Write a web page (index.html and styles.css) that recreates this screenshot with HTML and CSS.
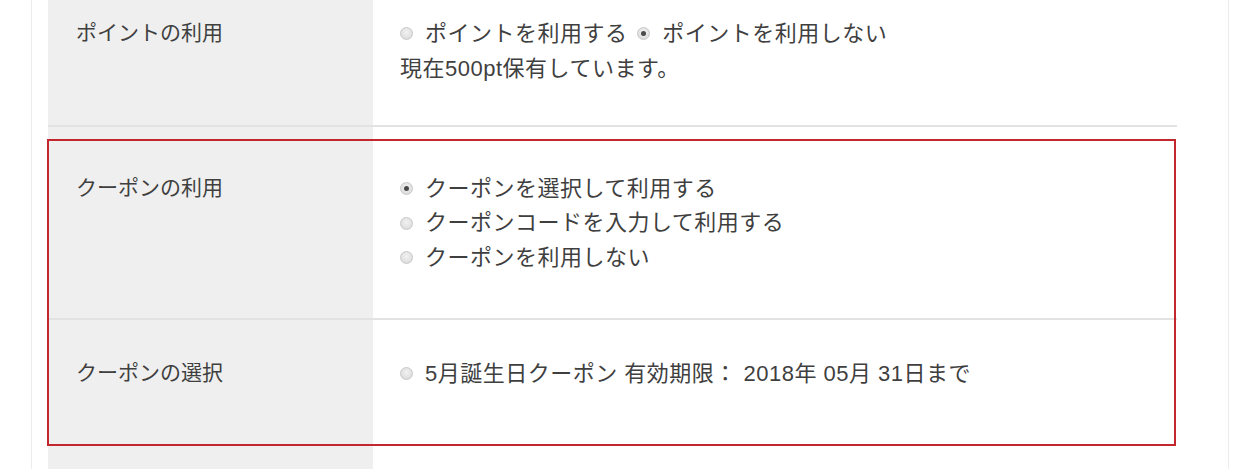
FILE: index.html
```html
<!DOCTYPE html>
<html lang="ja">
<head>
<meta charset="utf-8">
<title>ポイント・クーポンの利用</title>
<link rel="stylesheet" href="styles.css">
</head>
<body>
<div class="page">
  <div class="form">
    <div class="row row-points">
      <div class="label">ポイントの利用</div>
      <div class="value">
        <div class="line">
          <span class="opt"><span class="radio"></span>ポイントを利用する</span>
          <span class="opt"><span class="radio checked"></span>ポイントを利用しない</span>
        </div>
        <div class="line">現在500pt保有しています。</div>
      </div>
    </div>
    <div class="highlight">
      <div class="row row-coupon">
        <div class="label">クーポンの利用</div>
        <div class="value">
          <div class="line"><span class="opt"><span class="radio checked"></span>クーポンを選択して利用する</span></div>
          <div class="line"><span class="opt"><span class="radio"></span>クーポンコードを入力して利用する</span></div>
          <div class="line"><span class="opt"><span class="radio"></span>クーポンを利用しない</span></div>
        </div>
      </div>
      <div class="row row-select">
        <div class="label">クーポンの選択</div>
        <div class="value">
          <div class="line"><span class="opt"><span class="radio"></span>5月誕生日クーポン 有効期限： 2018年 05月 31日まで</span></div>
        </div>
      </div>
    </div>
  </div>
</div>
</body>
</html>
```

FILE: styles.css
```css
html, body {
  margin: 0;
  padding: 0;
  background: #ffffff;
}

body {
  font-family: "Liberation Sans", "Noto Sans CJK JP", sans-serif;
  color: #3f3f3f;
  overflow: hidden;
}

.page {
  margin-left: 31px;
  width: 1198px;
  height: 469px;
  box-sizing: border-box;
  border-left: 1px solid #ececec;
  border-right: 1px solid #ececec;
  padding: 0 51px 0 16px;
}

.form {
  width: 100%;
}

.row {
  display: grid;
  grid-template-columns: 325px 1fr;
}

.label {
  background: #efefef;
  font-size: 21px;
  line-height: 34px;
  padding-left: 28px;
}

.value {
  font-size: 22px;
  line-height: 34px;
  padding-left: 27px;
  letter-spacing: 0.5px;
}

.line {
  white-space: nowrap;
}

.opt {
  display: inline-flex;
  align-items: center;
  margin-right: 3px;
}

.radio {
  width: 11px;
  height: 11px;
  border-radius: 50%;
  border: 1px solid #c8c8c8;
  background: radial-gradient(circle at 50% 40%, #f2f2f2 0%, #d6d6d6 100%);
  margin-right: 12px;
  position: relative;
  flex: none;
}

.radio.checked::after {
  content: "";
  position: absolute;
  left: 3px;
  top: 3px;
  width: 5px;
  height: 5px;
  border-radius: 50%;
  background: #4a4a4a;
}

.row-points {
  height: 127px;
  box-sizing: border-box;
  border-bottom: 2px solid #e2e2e2;
}

.row-points .label,
.row-points .value {
  padding-top: 16px;
}

.row-points .line + .line {
  margin-top: 1px;
}

.highlight {
  position: relative;
}

.highlight::after {
  content: "";
  position: absolute;
  left: -1px;
  right: 1px;
  top: 12px;
  height: 307px;
  box-sizing: border-box;
  border: 2px solid #c1272d;
  pointer-events: none;
}

.row-coupon {
  height: 193px;
  box-sizing: border-box;
  border-bottom: 2px solid #e2e2e2;
}

.row-coupon .label,
.row-coupon .value {
  padding-top: 44px;
}

.row-select {
  height: 149px;
}

.row-select .label,
.row-select .value {
  padding-top: 36px;
}
```
